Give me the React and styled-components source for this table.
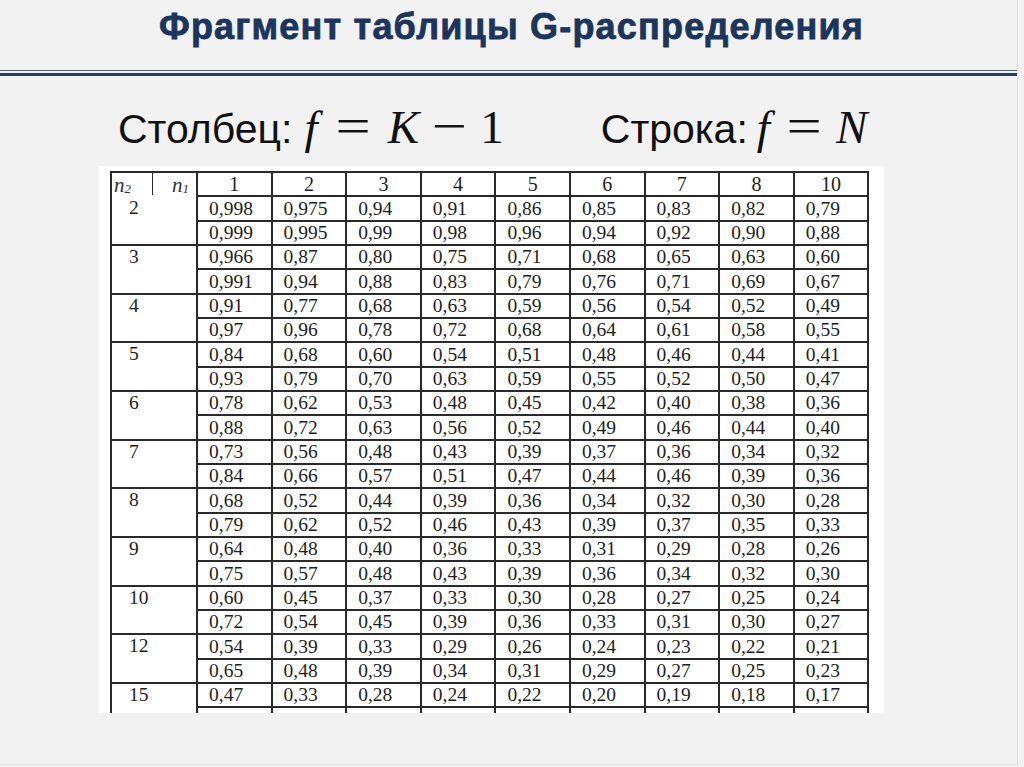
import React from "react";
import styled, { createGlobalStyle } from "styled-components";

const GlobalStyle = createGlobalStyle`
  html, body { margin: 0; padding: 0; background: #f2f2f2; }
  * { box-sizing: border-box; }
`;

const Slide = styled.div`
  width: 1018px;
  height: 765px;
  background: #f2f2f2;
  border-right: 1px solid #dedede;
  border-bottom: 1px solid #dedede;
  display: flex;
  flex-direction: column;
  overflow: hidden;
`;

const TitleBar = styled.header`
  height: 70px;
  display: flex;
  justify-content: center;
  padding-top: 7px;
  padding-left: 6px;
`;

const Title = styled.h1`
  margin: 0;
  font-family: "Liberation Sans", Arial, sans-serif;
  font-weight: 700;
  font-size: 36px;
  line-height: 40px;
  color: #1b355d;
  letter-spacing: 1.2px;
  -webkit-text-stroke: 0.8px #1b355d;
`;

const Rule = styled.div`
  width: 1024px;
  height: 6px;
  border-top: 1px solid #4a5d7e;
  border-bottom: 3px solid #2b3c5b;
`;

const Formula = styled.div`
  display: flex;
  align-items: baseline;
  padding-left: 118px;
  margin-top: 26px;
  height: 64px;
  font-family: "Liberation Sans", Arial, sans-serif;
  font-size: 41px;
  line-height: 48px;
  color: #111;
`;

const Group = styled.div`
  display: flex;
  align-items: baseline;
  margin-right: ${p => p.$gap || 0}px;
`;

const Label = styled.span`
  margin-right: ${p => p.$mr || 10}px;
`;

const MathVar = styled.span`
  font-family: "Liberation Serif", "DejaVu Serif", serif;
  font-style: italic;
  font-size: 47px;
`;

const MathOp = styled.span`
  font-family: "Liberation Serif", "DejaVu Serif", serif;
  font-size: 50px;
  display: inline-block;
  transform: scaleX(1.25);
  margin-left: ${p => p.$ml}px;
  margin-right: ${p => p.$mr}px;
`;

const MathNum = styled.span`
  font-family: "Liberation Serif", "DejaVu Serif", serif;
  font-size: 47px;
`;

const Panel = styled.div`
  margin-left: 99px;
  width: 785px;
  height: 547px;
  background: #fff;
  padding: 5px 0 0 11px;
  overflow: hidden;
`;

const Grid = styled.div`
  display: grid;
  grid-template-columns: 86px repeat(9, 74.6px);
  grid-auto-rows: 24.33px;
  border-left: 2px solid #2a2a2a;
  border-top: 2px solid #2a2a2a;
  width: max-content;
  font-family: "Liberation Serif", "Times New Roman", serif;
  color: #1e1e1e;
`;

const Cell = styled.div`
  border-right: 2px solid #2a2a2a;
  border-bottom: 2px solid #2a2a2a;
  display: flex;
  align-items: center;
  justify-content: ${p => (p.$center ? "center" : "flex-start")};
  padding-left: ${p => (p.$center ? 0 : 11)}px;
  font-size: ${p => (p.$center ? 20 : 19.5)}px;
  line-height: 1;
  white-space: nowrap;
`;

const CornerCell = styled.div`
  border-right: 2px solid #2a2a2a;
  display: flex;
  align-items: stretch;
  font-size: 21px;
  font-style: italic;
  color: #333;
`;

const CornerPart = styled.div`
  width: ${p => p.$w}px;
  display: flex;
  align-items: center;
  padding-left: ${p => p.$pl || 0}px;
  padding-top: 2px;
  margin-bottom: 2px;
  border-right: ${p => (p.$divider ? "1.5px solid #2a2a2a" : "none")};
`;

const Sub = styled.span`
  font-size: 13px;
  position: relative;
  top: 4px;
`;

const GroupLabel = styled.div`
  grid-row: span 2;
  border-right: 2px solid #2a2a2a;
  border-bottom: 2px solid #2a2a2a;
  padding-left: 17px;
  font-size: 19.5px;
  line-height: 22px;
`;

const headers = ["1", "2", "3", "4", "5", "6", "7", "8", "10"];

const data = [
  ["2", ["0,998", "0,975", "0,94", "0,91", "0,86", "0,85", "0,83", "0,82", "0,79"], ["0,999", "0,995", "0,99", "0,98", "0,96", "0,94", "0,92", "0,90", "0,88"]],
  ["3", ["0,966", "0,87", "0,80", "0,75", "0,71", "0,68", "0,65", "0,63", "0,60"], ["0,991", "0,94", "0,88", "0,83", "0,79", "0,76", "0,71", "0,69", "0,67"]],
  ["4", ["0,91", "0,77", "0,68", "0,63", "0,59", "0,56", "0,54", "0,52", "0,49"], ["0,97", "0,96", "0,78", "0,72", "0,68", "0,64", "0,61", "0,58", "0,55"]],
  ["5", ["0,84", "0,68", "0,60", "0,54", "0,51", "0,48", "0,46", "0,44", "0,41"], ["0,93", "0,79", "0,70", "0,63", "0,59", "0,55", "0,52", "0,50", "0,47"]],
  ["6", ["0,78", "0,62", "0,53", "0,48", "0,45", "0,42", "0,40", "0,38", "0,36"], ["0,88", "0,72", "0,63", "0,56", "0,52", "0,49", "0,46", "0,44", "0,40"]],
  ["7", ["0,73", "0,56", "0,48", "0,43", "0,39", "0,37", "0,36", "0,34", "0,32"], ["0,84", "0,66", "0,57", "0,51", "0,47", "0,44", "0,46", "0,39", "0,36"]],
  ["8", ["0,68", "0,52", "0,44", "0,39", "0,36", "0,34", "0,32", "0,30", "0,28"], ["0,79", "0,62", "0,52", "0,46", "0,43", "0,39", "0,37", "0,35", "0,33"]],
  ["9", ["0,64", "0,48", "0,40", "0,36", "0,33", "0,31", "0,29", "0,28", "0,26"], ["0,75", "0,57", "0,48", "0,43", "0,39", "0,36", "0,34", "0,32", "0,30"]],
  ["10", ["0,60", "0,45", "0,37", "0,33", "0,30", "0,28", "0,27", "0,25", "0,24"], ["0,72", "0,54", "0,45", "0,39", "0,36", "0,33", "0,31", "0,30", "0,27"]],
  ["12", ["0,54", "0,39", "0,33", "0,29", "0,26", "0,24", "0,23", "0,22", "0,21"], ["0,65", "0,48", "0,39", "0,34", "0,31", "0,29", "0,27", "0,25", "0,23"]],
  ["15", ["0,47", "0,33", "0,28", "0,24", "0,22", "0,20", "0,19", "0,18", "0,17"], ["", "", "", "", "", "", "", "", ""]],
];

export default function App() {
  return (
    <>
      <GlobalStyle />
      <Slide>
        <TitleBar>
          <Title>Фрагмент таблицы G-распределения</Title>
        </TitleBar>
        <Rule />
        <Formula>
          <Group $gap={97}>
            <Label $mr={12}>Столбец:</Label>
            <MathVar>f</MathVar>
            <MathOp $ml={21} $mr={21}>=</MathOp>
            <MathVar>K</MathVar>
            <MathOp $ml={16} $mr={17}>−</MathOp>
            <MathNum>1</MathNum>
          </Group>
          <Group>
            <Label $mr={9}>Строка:</Label>
            <MathVar>f</MathVar>
            <MathOp $ml={20} $mr={18}>=</MathOp>
            <MathVar>N</MathVar>
          </Group>
        </Formula>
        <Panel>
          <Grid>
            <CornerCell>
              <CornerPart $w={41} $pl={2} $divider>
                n<Sub>2</Sub>
              </CornerPart>
              <CornerPart $w={43} $pl={19}>
                n<Sub>1</Sub>
              </CornerPart>
            </CornerCell>
            {headers.map(h => (
              <Cell key={h} $center>
                {h}
              </Cell>
            ))}
            {data.map(([n2, r1, r2]) => (
              <React.Fragment key={n2}>
                <GroupLabel>{n2}</GroupLabel>
                {r1.map((v, i) => (
                  <Cell key={"a" + i}>{v}</Cell>
                ))}
                {r2.map((v, i) => (
                  <Cell key={"b" + i}>{v}</Cell>
                ))}
              </React.Fragment>
            ))}
          </Grid>
        </Panel>
      </Slide>
    </>
  );
}
